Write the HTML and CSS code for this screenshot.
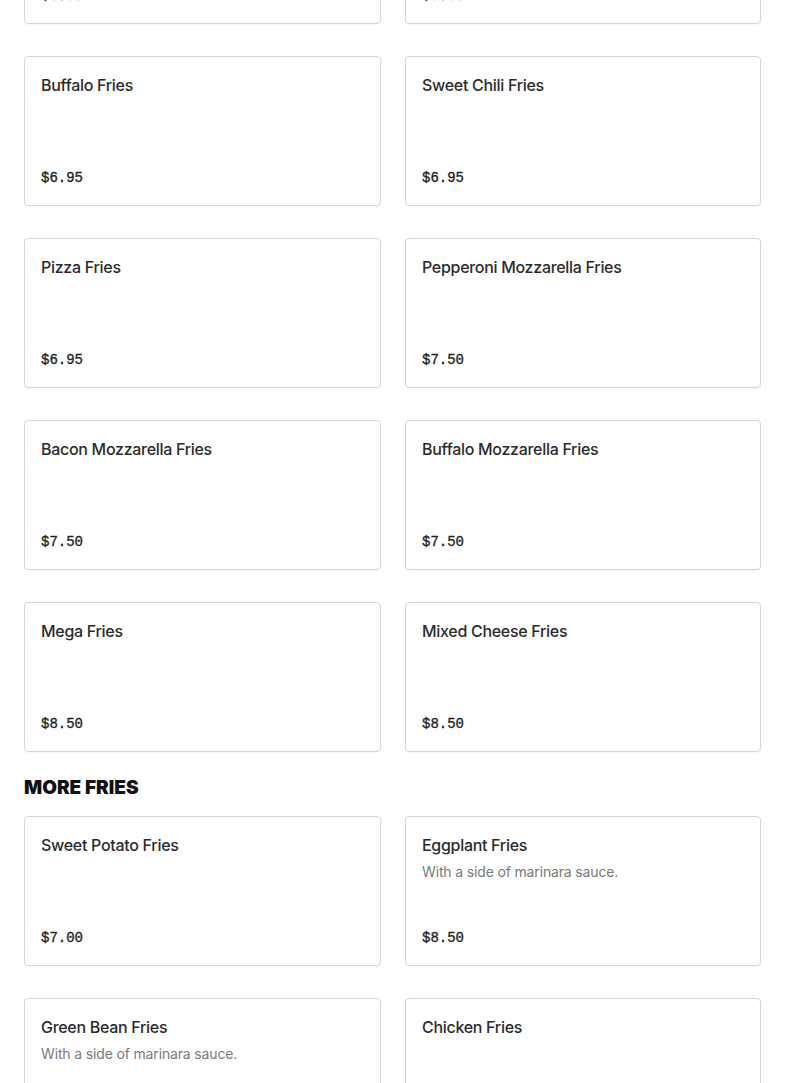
FILE: index.html
```html
<!DOCTYPE html>
<html lang="en">
<head>
<meta charset="utf-8">
<title>Fries</title>
<link rel="stylesheet" href="styles.css">
</head>
<body>
<main class="menu">
  <section class="grid grid-first">
    <article class="card"><h3 class="name">Cheese Fries</h3><p class="price">$5.95</p></article>
    <article class="card"><h3 class="name">Gravy Fries</h3><p class="price">$5.95</p></article>
    <article class="card"><h3 class="name">Buffalo Fries</h3><p class="price">$6.95</p></article>
    <article class="card"><h3 class="name">Sweet Chili Fries</h3><p class="price">$6.95</p></article>
    <article class="card"><h3 class="name">Pizza Fries</h3><p class="price">$6.95</p></article>
    <article class="card"><h3 class="name">Pepperoni Mozzarella Fries</h3><p class="price">$7.50</p></article>
    <article class="card"><h3 class="name">Bacon Mozzarella Fries</h3><p class="price">$7.50</p></article>
    <article class="card"><h3 class="name">Buffalo Mozzarella Fries</h3><p class="price">$7.50</p></article>
    <article class="card"><h3 class="name">Mega Fries</h3><p class="price">$8.50</p></article>
    <article class="card"><h3 class="name">Mixed Cheese Fries</h3><p class="price">$8.50</p></article>
  </section>
  <h2 class="section-title">MORE FRIES</h2>
  <section class="grid">
    <article class="card"><h3 class="name">Sweet Potato Fries</h3><p class="price">$7.00</p></article>
    <article class="card"><h3 class="name">Eggplant Fries</h3><p class="desc">With a side of marinara sauce.</p><p class="price">$8.50</p></article>
    <article class="card"><h3 class="name">Green Bean Fries</h3><p class="desc">With a side of marinara sauce.</p><p class="price">$8.50</p></article>
    <article class="card"><h3 class="name">Chicken Fries</h3><p class="price">$8.50</p></article>
  </section>
</main>
</body>
</html>
```

FILE: styles.css
```css
* { box-sizing: border-box; }
html, body { margin: 0; padding: 0; background: #ffffff; }
body {
  font-family: Inter, "Liberation Sans", Arial, sans-serif;
  color: #2b2b2b;
  overflow: hidden;
}
.menu {
  padding: 0 24px;
}
.grid {
  display: grid;
  grid-template-columns: 357px 356px;
  column-gap: 24px;
  row-gap: 32px;
}
.grid-first {
  margin-top: -126px;
}
.card {
  display: flex;
  flex-direction: column;
  height: 150px;
  padding: 16px 16px 15px;
  border: 1px solid #d6d6d6;
  border-radius: 4px;
  background: #fff;
  box-shadow: 0 1px 2px rgba(0,0,0,0.04);
}
.name {
  margin: 0;
  font-size: 16px;
  line-height: 24px;
  font-weight: 500;
  color: #2b2b2b;
  letter-spacing: -0.3px;
}
.desc {
  margin: 5px 0 0;
  font-size: 14px;
  line-height: 20px;
  color: #7a7a7a;
  letter-spacing: -0.15px;
}
.price {
  margin: auto 0 0;
  font-family: "Liberation Mono", "DejaVu Sans Mono", monospace;
  font-size: 14px;
  line-height: 24px;
  font-weight: 400;
  color: #1f1f1f;
  -webkit-text-stroke: 0.35px #1f1f1f;
}
.section-title {
  margin: 24px 0 16px;
  font-size: 19px;
  line-height: 24px;
  font-weight: 900;
  color: #111;
  letter-spacing: 0;
}
```
